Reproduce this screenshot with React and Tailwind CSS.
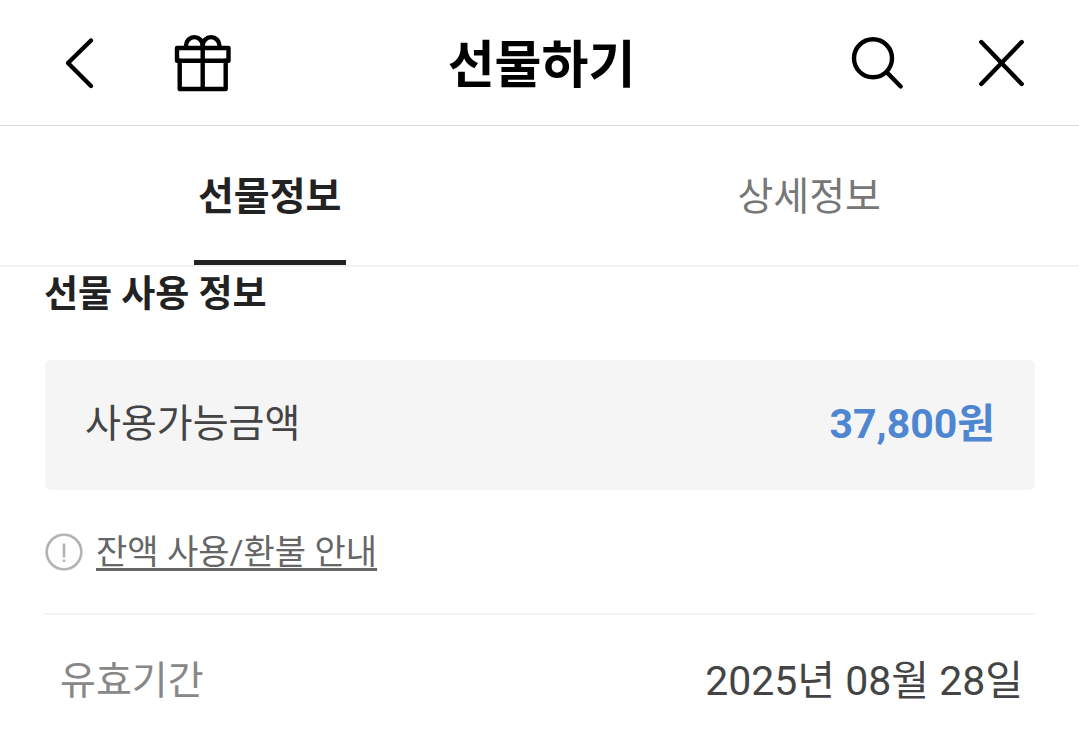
const tabs = [
  { id: 'gift', label: '선물정보', active: true },
  { id: 'detail', label: '상세정보', active: false },
];

function IconButton({ label, children }) {
  return (
    <button type="button" aria-label={label} className="size-16 shrink-0">
      <svg
        viewBox="0 0 64 64"
        className="size-16"
        fill="none"
        stroke="currentColor"
        strokeWidth="4.4"
        strokeLinecap="round"
        strokeLinejoin="round"
      >
        {children}
      </svg>
    </button>
  );
}

function Header() {
  return (
    <header className="grid grid-cols-[1fr_auto_1fr] items-center border-b border-[#d9d9d9] px-12 pt-[30px] pb-[31px] text-black">
      <div className="flex gap-[60px]">
        <IconButton label="뒤로">
          <path d="M43 10.5 20 33l23 23" />
        </IconButton>
        <IconButton label="선물함">
          <rect x="5" y="18" width="51.5" height="12.7" />
          <path d="M7.7 30.7V59h46V30.7M30.7 14v45" />
          <path d="M14 17.5v-2a8.35 8.35 0 0 1 16.7 0a8.35 8.35 0 0 1 16.7 0v2" />
        </IconButton>
      </div>
      <h1 className="pt-2 pl-1 text-[51px] leading-[56px] font-bold">선물하기</h1>
      <div className="flex justify-end gap-[60px]">
        <IconButton label="검색">
          <circle cx="30" cy="28.3" r="19" />
          <path d="M44 42.5 57.7 56.5" />
        </IconButton>
        <IconButton label="닫기">
          <path d="M14.3 12l40.4 42M54.7 12 14.3 54" />
        </IconButton>
      </div>
    </header>
  );
}

function Tabs() {
  return (
    <nav className="grid grid-cols-2 border-b-2 border-[#f3f3f3]">
      {tabs.map((tab) => (
        <div key={tab.id} className="flex justify-center">
          <button
            type="button"
            className={
              tab.active
                ? 'border-b-[5px] border-[#222] px-1 pt-[41px] pb-[33px] text-[39px] leading-[60px] font-bold text-[#222]'
                : 'border-b-[5px] border-transparent px-1 pt-[41px] pb-[33px] text-[39px] leading-[60px] text-[#777]'
            }
          >
            {tab.label}
          </button>
        </div>
      ))}
    </nav>
  );
}

export default function App() {
  return (
    <div className="bg-white font-['Roboto','Noto_Sans_CJK_KR',sans-serif]">
      <Header />
      <Tabs />
      <main className="px-11">
        <h2 className="pt-px text-[37px] leading-[54px] font-bold text-[#222]">선물 사용 정보</h2>

        <div className="ml-px mt-[38px] flex items-center justify-between rounded-md bg-[#f5f5f5] px-10 pt-[34px] pb-9 leading-[60px]">
          <span className="text-[39px] text-[#444]">사용가능금액</span>
          <strong className="text-[41px] font-bold text-[#4f86d2]">37,800원</strong>
        </div>

        <div className="mt-8 flex items-center gap-3 border-b-2 border-[#f5f5f5] pb-[31px]">
          <svg viewBox="0 0 40 40" className="size-10" fill="none" stroke="#b3b3b3" strokeWidth="2.6">
            <circle cx="20" cy="20" r="17.3" />
            <path d="M20 11.5v14M20 27.5v2.5" />
          </svg>
          <a
            href="#refund"
            className="text-[34px] leading-[60px] text-[#666] underline decoration-[3px] underline-offset-4"
          >
            잔액 사용/환불 안내
          </a>
        </div>

        <dl className="flex items-center justify-between pt-9 pr-3 pb-5 pl-4 leading-[60px]">
          <dt className="text-[39px] text-[#888]">유효기간</dt>
          <dd className="text-[41px] text-[#444]">2025년 08월 28일</dd>
        </dl>
      </main>
    </div>
  );
}
